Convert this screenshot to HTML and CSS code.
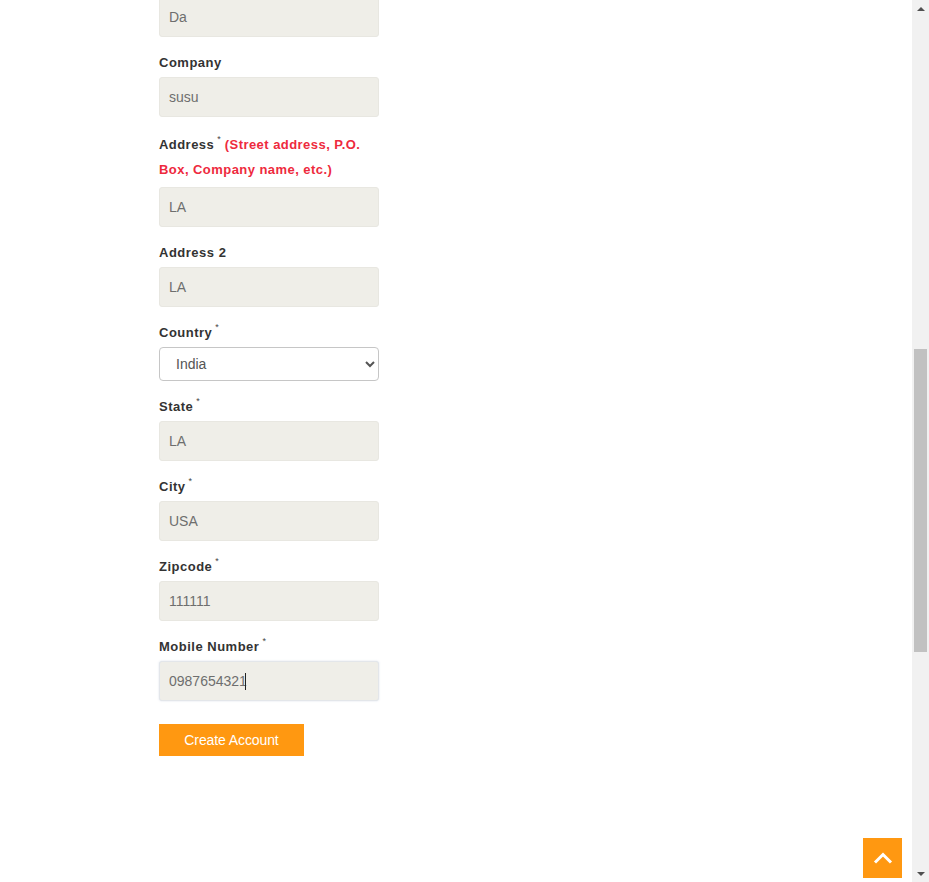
FILE: index.html
```html
<!DOCTYPE html>
<html lang="en">
<head>
<meta charset="utf-8">
<title>Create Account</title>
<link rel="stylesheet" href="styles.css">
</head>
<body>
<div class="viewport">
  <main class="page">
    <form class="form">
      <input class="field field-first" type="text" value="Da">

      <label class="label">Company</label>
      <input class="field" type="text" value="susu">

      <label class="label label-address">Address<sup>*</sup> <span class="hint">(Street address, P.O. Box, Company name, etc.)</span></label>
      <input class="field" type="text" value="LA">

      <label class="label">Address 2</label>
      <input class="field" type="text" value="LA">

      <label class="label">Country<sup>*</sup></label>
      <select class="select">
        <option>India</option>
      </select>

      <label class="label">State<sup>*</sup></label>
      <input class="field" type="text" value="LA">

      <label class="label">City<sup>*</sup></label>
      <input class="field" type="text" value="USA">

      <label class="label">Zipcode<sup>*</sup></label>
      <input class="field" type="text" value="111111">

      <label class="label">Mobile Number<sup>*</sup></label>
      <div class="focus-wrap">
        <input class="field field-focus" type="text" value="0987654321">
        <span class="caret"></span>
      </div>

      <button class="submit" type="button">Create Account</button>
    </form>
    <a class="to-top" href="#" aria-label="Back to top">
      <svg width="20" height="12" viewBox="0 0 20 12"><path d="M2 10.5 L10 2.5 L18 10.5" fill="none" stroke="#fff" stroke-width="3"/></svg>
    </a>
  </main>
  <div class="scrollbar">
    <div class="sb-arrow sb-up"></div>
    <div class="sb-track"><div class="sb-thumb"></div></div>
    <div class="sb-arrow sb-down"></div>
  </div>
</div>
</body>
</html>
```

FILE: styles.css
```css
* { box-sizing: border-box; }
html, body {
  margin: 0;
  padding: 0;
  height: 100%;
  overflow: hidden;
  background: #fff;
  font-family: "Liberation Sans", Arial, sans-serif;
}
.viewport {
  display: flex;
  height: 882px;
  width: 929px;
}
.page {
  flex: 1;
  position: relative;
  overflow: hidden;
}
.form {
  display: flex;
  flex-direction: column;
  align-items: flex-start;
  padding-left: 159px;
}
.field {
  display: block;
  width: 220px;
  height: 40px;
  margin: 0;
  padding: 0 9px;
  background: #efeee8;
  border: 1px solid #e8e7e1;
  border-radius: 3px;
  font-family: "Liberation Sans", Arial, sans-serif;
  font-size: 14px;
  color: #6e6e6e;
  outline: none;
}
.field-first { margin-top: -3px; }
.label {
  display: block;
  width: 220px;
  margin-top: 13px;
  margin-bottom: 2px;
  font-size: 13px;
  font-weight: bold;
  line-height: 25px;
  color: #333;
  letter-spacing: 0.5px;
}
.label sup {
  display: inline-block;
  margin-left: 3px;
  font-size: 9px;
  font-weight: normal;
  color: #444;
  line-height: 9px;
  vertical-align: 7px;
  letter-spacing: 0;
}
.label-address {
  margin-top: 15px;
  margin-bottom: 5px;
  letter-spacing: 0.45px;
}
.hint {
  color: #ee2a3d;
}
.select {
  display: block;
  width: 220px;
  height: 34px;
  margin: 0;
  padding: 0 12px;
  background: #fff;
  border: 1px solid #c6c6c6;
  border-radius: 4px;
  font-family: "Liberation Sans", Arial, sans-serif;
  font-size: 14px;
  color: #555;
}
.focus-wrap {
  position: relative;
}
.field-focus {
  border-color: #e3e6ea;
  box-shadow: 0 0 2px rgba(140, 160, 190, 0.35);
}
.caret {
  position: absolute;
  left: 86px;
  top: 12px;
  width: 1px;
  height: 17px;
  background: #222;
}
.submit {
  margin-top: 23px;
  width: 145px;
  height: 32px;
  padding: 0;
  border: none;
  background: #ff9811;
  color: #fff;
  font-family: "Liberation Sans", Arial, sans-serif;
  font-size: 14px;
  letter-spacing: -0.1px;
  cursor: pointer;
}
.to-top {
  position: absolute;
  right: 10px;
  bottom: 4px;
  width: 39px;
  height: 40px;
  background: #ff9811;
  display: flex;
  align-items: center;
  justify-content: center;
}
.scrollbar {
  width: 17px;
  background: #f1f1f1;
  display: flex;
  flex-direction: column;
}
.sb-arrow {
  height: 17px;
  display: flex;
  align-items: center;
  justify-content: center;
}
.sb-up::before {
  content: "";
  border-left: 4px solid transparent;
  border-right: 4px solid transparent;
  border-bottom: 4px solid #505050;
}
.sb-down::before {
  content: "";
  border-left: 4px solid transparent;
  border-right: 4px solid transparent;
  border-top: 4px solid #505050;
}
.sb-track {
  flex: 1;
  padding: 332px 2px 213px;
}
.sb-thumb {
  height: 100%;
  background: #c1c1c1;
}
```
